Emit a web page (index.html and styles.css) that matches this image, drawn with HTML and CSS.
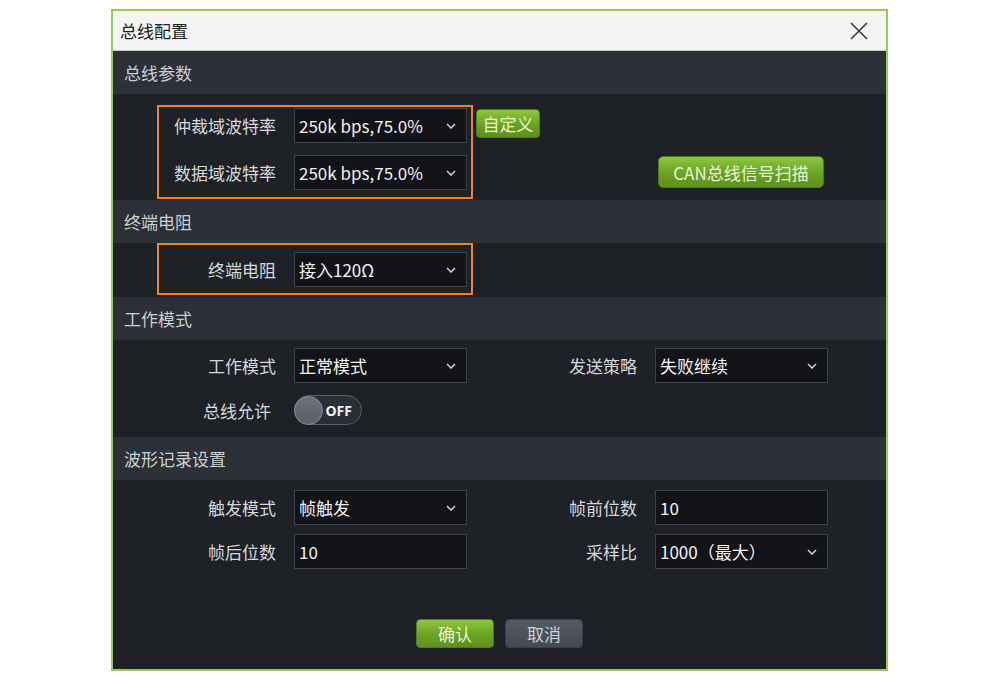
FILE: index.html
```html
<html>
	<head>
		<meta charset="utf-8">
		<title>总线配置</title>
		<link rel="stylesheet" href="styles.css">
	</head>
	<body>
		<div class="dialog">
			<div class="titlebar">
				<span class="title">总线配置</span>
				<svg class="close" width="20" height="20" viewBox="0 0 20 20">
					<path d="M2 2 L18 18 M18 2 L2 18" stroke="#3a3a3a" stroke-width="1.6" fill="none"/>
				</svg>
			</div>

			<div class="sec-head">总线参数</div>
			<div class="sec-body bus-body">
				<div class="hl-box">
					<label class="lbl">仲裁域波特率</label>
					<div class="select">250k bps,75.0%<svg class="chev" width="10" height="6" viewBox="0 0 10 6"><polyline points="1,1 5,5 9,1"/></svg></div>
					<label class="lbl">数据域波特率</label>
					<div class="select">250k bps,75.0%<svg class="chev" width="10" height="6" viewBox="0 0 10 6"><polyline points="1,1 5,5 9,1"/></svg></div>
				</div>
				<div class="side-btns">
					<button class="btn green btn-custom">自定义</button>
					<button class="btn green btn-scan">CAN总线信号扫描</button>
				</div>
			</div>

			<div class="sec-head">终端电阻</div>
			<div class="sec-body term-body">
				<div class="hl-box">
					<label class="lbl">终端电阻</label>
					<div class="select">接入120Ω<svg class="chev" width="10" height="6" viewBox="0 0 10 6"><polyline points="1,1 5,5 9,1"/></svg></div>
				</div>
			</div>

			<div class="sec-head">工作模式</div>
			<div class="sec-body mode-body">
				<div class="form-grid">
					<label class="lbl">工作模式</label>
					<div class="select">正常模式<svg class="chev" width="10" height="6" viewBox="0 0 10 6"><polyline points="1,1 5,5 9,1"/></svg></div>
					<label class="lbl">发送策略</label>
					<div class="select">失败继续<svg class="chev" width="10" height="6" viewBox="0 0 10 6"><polyline points="1,1 5,5 9,1"/></svg></div>
					<label class="lbl lbl-toggle">总线允许</label>
					<div class="toggle-cell">
						<div class="toggle">
							<span class="knob"></span>
							<span class="toggle-text">OFF</span>
						</div>
					</div>
				</div>
			</div>

			<div class="sec-head">波形记录设置</div>
			<div class="sec-body wave-body">
				<div class="form-grid wave-grid">
					<label class="lbl">触发模式</label>
					<div class="select">帧触发<svg class="chev" width="10" height="6" viewBox="0 0 10 6"><polyline points="1,1 5,5 9,1"/></svg></div>
					<label class="lbl">帧前位数</label>
					<div class="input">10</div>
					<label class="lbl">帧后位数</label>
					<div class="input">10</div>
					<label class="lbl">采样比</label>
					<div class="select">1000（最大）<svg class="chev" width="10" height="6" viewBox="0 0 10 6"><polyline points="1,1 5,5 9,1"/></svg></div>
				</div>
				<div class="footer">
					<button class="btn green btn-foot">确认</button>
					<button class="btn gray btn-foot">取消</button>
				</div>
			</div>
		</div>
	</body>
</html>
```

FILE: styles.css
```css
body {
	margin: 0;
	background: #ffffff;
	font-family: "Noto Sans CJK SC", "Noto Sans", sans-serif;
}

.dialog {
	width: 777px;
	height: 662px;
	margin: 9px 0 0 111px;
	box-sizing: border-box;
	border: 2px solid #9ac75e;
	background-color: #1e2126;
	display: flex;
	flex-direction: column;
}

.titlebar {
	height: 39px;
	background-color: #f4f4f4;
	border-bottom: 1px solid #c9c9c9;
	display: flex;
	align-items: center;
	justify-content: space-between;
	padding: 0 17px 0 7px;
}

.title {
	font-size: 17px;
	color: #222222;
}

.close {
	display: block;
}

.sec-head {
	height: 43px;
	background-color: #2c3037;
	color: #c9ced3;
	font-size: 17px;
	display: flex;
	align-items: center;
	padding-left: 11px;
}

.sec-body {
	background-color: #1e2126;
}

.bus-body {
	height: 106px;
	box-sizing: border-box;
	padding: 11px 0 0 44px;
	display: flex;
	align-items: flex-start;
}

.term-body {
	height: 54px;
	box-sizing: border-box;
	padding-left: 44px;
}

.mode-body {
	height: 97px;
	box-sizing: border-box;
	padding: 8px 0 0 46px;
}

.wave-body {
	flex: 1;
	box-sizing: border-box;
	padding: 10px 0 0 46px;
}

.hl-box {
	display: grid;
	grid-template-columns: 117px 173px;
	column-gap: 18px;
	row-gap: 12px;
	align-items: center;
	width: fit-content;
	border: 2px solid #f0822e;
	padding: 1px 4px 7px 0;
}

.term-body .hl-box {
	padding: 7px 4px 6px 0;
}

.form-grid {
	display: grid;
	grid-template-columns: 117px 173px 152px 173px;
	column-gap: 18px;
	row-gap: 12px;
	align-items: center;
}

.wave-grid {
	row-gap: 9px;
}

.lbl {
	text-align: right;
	font-size: 17px;
	color: #d4d8dc;
}

.lbl-toggle {
	padding-right: 5px;
}

.select, .input {
	height: 35px;
	box-sizing: border-box;
	background-color: #121418;
	border: 1px solid #3d4148;
	color: #f2f2f2;
	font-size: 17px;
	display: flex;
	align-items: center;
	justify-content: space-between;
	padding: 0 10px 0 4px;
}

.chev {
	fill: none;
	stroke: #c9cdd2;
	stroke-width: 1.6;
}

.side-btns {
	display: flex;
	flex-direction: column;
	align-items: flex-start;
	margin-left: 3px;
}

.btn {
	font-family: "Noto Sans CJK SC", "Noto Sans", sans-serif;
	font-size: 17px;
	border-radius: 4px;
	padding: 0;
	cursor: pointer;
}

.green {
	background: linear-gradient(#8ec63f, #6aa322 55%, #5c9218);
	border: 1px solid #4d7d14;
	color: #e9f3d9;
}

.gray {
	background: linear-gradient(#555a62, #454a52);
	border: 1px solid #3a3e45;
	color: #c9d1da;
}

.btn-custom {
	width: 64px;
	height: 29px;
	margin-top: 4px;
}

.btn-scan {
	width: 166px;
	height: 32px;
	margin-top: 18px;
	margin-left: 182px;
	border-radius: 5px;
}

.toggle-cell {
	display: flex;
}

.toggle {
	width: 68px;
	height: 30px;
	box-sizing: border-box;
	border-radius: 15px;
	border: 1.5px solid #5a5f66;
	background-color: #2b2e34;
	display: flex;
	align-items: center;
}

.knob {
	width: 29px;
	height: 29px;
	box-sizing: border-box;
	border-radius: 50%;
	background: linear-gradient(#6e737b, #5a5f67);
	border: 1.5px solid #888d94;
	margin-left: -1.5px;
}

.toggle-text {
	color: #f0f0f0;
	font-family: "Noto Sans", sans-serif;
	font-weight: bold;
	font-size: 14px;
	margin-left: 3px;
}

.footer {
	display: flex;
	justify-content: center;
	gap: 11px;
	margin: 50px 0 0 -46px;
}

.btn-foot {
	width: 78px;
	height: 29px;
}
```
